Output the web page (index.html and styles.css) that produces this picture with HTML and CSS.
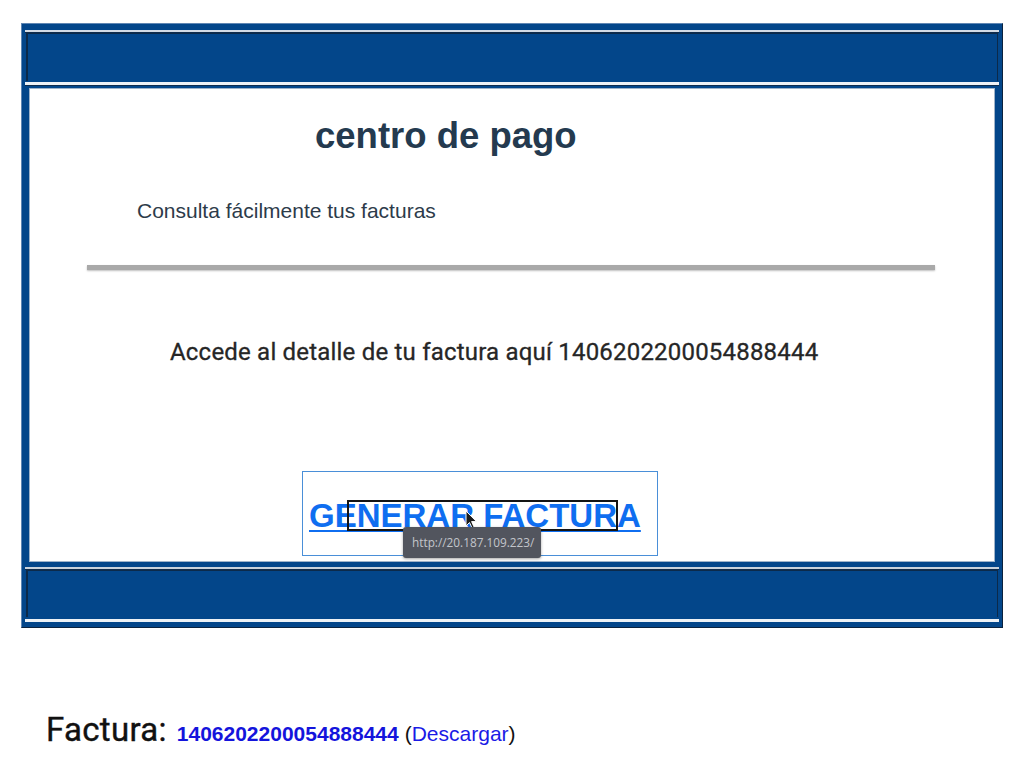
FILE: index.html
```html
<!DOCTYPE html>
<html lang="es">
<head>
<meta charset="utf-8">
<title>centro de pago</title>
<link rel="stylesheet" href="styles.css">
</head>
<body>
<div class="frame">
  <div class="rule-top"></div>
  <div class="band band-top"></div>
  <div class="rule rule-mid"></div>
  <div class="content">
    <h1 class="title">centro de pago</h1>
    <p class="subtitle">Consulta fácilmente tus facturas</p>
    <div class="divider"></div>
    <p class="detail">Accede al detalle de tu factura aquí 1406202200054888444</p>
    <div class="btn-box">
      <a class="btn-link" href="#">GENERAR FACTURA</a>
      <span class="focus-ring"></span>
      <svg class="cursor" width="13" height="20" viewBox="0 0 13 20"><path d="M1 1 L1 16 L4.5 12.5 L7.5 19 L9.5 18 L6.6 11.6 L11.5 11.6 Z" fill="#1b1b1b" stroke="#ffffff" stroke-width="1"/></svg>
      <span class="tooltip">http://20.187.109.223/</span>
    </div>
  </div>
  <div class="rule rule-low"></div>
  <div class="band band-bottom"></div>
  <div class="rule rule-end"></div>
</div>
<div class="footer">
  <span class="footer-label">Factura:</span>
  <a class="footer-num" href="#">1406202200054888444</a>
  <span class="footer-dl">(<a href="#">Descargar</a>)</span>
</div>
</body>
</html>
```
FILE: styles.css
```css
html, body {
  margin: 0;
  padding: 0;
  background: #ffffff;
}
body {
  width: 1024px;
  height: 770px;
  overflow: hidden;
  font-family: "Liberation Sans", Arial, sans-serif;
}
.frame {
  box-sizing: border-box;
  width: 982px;
  height: 605px;
  margin: 23px 0 0 21px;
  background: #03468a;
  border: 1px solid;
  border-color: #5f86b3 #0b223d #0b223d #5f86b3;
  padding: 6px 7px 0 7px;
  display: flex;
  flex-direction: column;
}
.rule-top {
  height: 2px;
  margin: 0 -4px;
  background: #d3dbe5;
  border-bottom: 1px solid #0f2c4c;
}
.band {
  height: 48px;
  margin: 0 -3px;
  background: #03468a;
  box-shadow: inset 2px 1px 0 #0c2a4a, inset -1px 0 0 #0c2a4a;
}
.rule {
  height: 3px;
  margin: 0 -4px;
  background: #eef2f6;
}
.rule-mid {
  margin-top: 1px;
  margin-bottom: 2px;
  border-bottom: 1px solid #0f2c4c;
}
.content {
  box-sizing: border-box;
  height: 474px;
  background: #ffffff;
  border: 1px solid #9fb3c9;
  display: flex;
  flex-direction: column;
  align-items: flex-start;
}
.title {
  margin: 29px 0 0 285px;
  font: bold 36.5px/36px "Liberation Sans", Arial, sans-serif;
  color: #243a4f;
}
.subtitle {
  margin: 46px 0 0 107px;
  font: 21px/21px "Liberation Sans", Arial, sans-serif;
  color: #2d3b4a;
}
.divider {
  margin: 44px 0 0 57px;
  width: 848px;
  height: 5px;
  background: #a9a9a9;
  box-shadow: 0 1px 2px rgba(0, 0, 0, 0.25);
}
.detail {
  margin: 70px 0 0 140px;
  font: 400 24px/24px Roboto, "Noto Sans", sans-serif;
  color: #262626;
  letter-spacing: 0.2px;
  -webkit-text-stroke: 0.3px #262626;
}
.btn-box {
  position: relative;
  box-sizing: border-box;
  margin: 107px 0 0 272px;
  width: 356px;
  height: 85px;
  border: 1px solid #4a8fd8;
  padding: 27px 0 0 6px;
}
.btn-link {
  display: inline-block;
  font: bold 33px/33px "Liberation Sans", Arial, sans-serif;
  color: #0f6ef0;
  text-decoration: underline;
  text-decoration-thickness: 2px;
  text-underline-offset: 3px;
}
.focus-ring {
  position: absolute;
  left: 44px;
  top: 28px;
  width: 271px;
  height: 31px;
  box-sizing: border-box;
  border: 2px solid #141414;
}
.cursor {
  position: absolute;
  left: 162px;
  top: 38px;
}
.tooltip {
  position: absolute;
  left: 100px;
  top: 55px;
  width: 138px;
  height: 31px;
  box-sizing: border-box;
  padding: 0 0 0 9px;
  background: #52555e;
  border-radius: 3px;
  box-shadow: 0 1px 3px rgba(0, 0, 0, 0.35);
  color: #c3c5cb;
  font: 11.8px/31px "Open Sans", "Noto Sans", sans-serif;
  white-space: nowrap;
  z-index: 2;
}
.rule-low {
  height: 2px;
  margin-top: 5px;
  background: #c9d2dc;
  border-bottom: 1px solid #0f2c4c;
}
.band-bottom {
  height: 47px;
}
.rule-end {
  margin-top: 2px;
}
.footer {
  display: flex;
  align-items: baseline;
  margin: 82px 0 0 46px;
  height: 40px;
  line-height: 40px;
}
.footer-label {
  font: 400 33px/40px Roboto, "Noto Sans", sans-serif;
  color: #111111;
  letter-spacing: 0.3px;
  -webkit-text-stroke: 0.4px #111111;
  margin-right: 10px;
}
.footer-num {
  font: bold 21px/40px "Liberation Sans", Arial, sans-serif;
  color: #1414dc;
  text-decoration: none;
  margin-right: 6px;
}
.footer-dl {
  font: 21px/40px "Liberation Sans", Arial, sans-serif;
  color: #111111;
}
.footer-dl a {
  color: #1a1ae6;
  text-decoration: none;
}
```
